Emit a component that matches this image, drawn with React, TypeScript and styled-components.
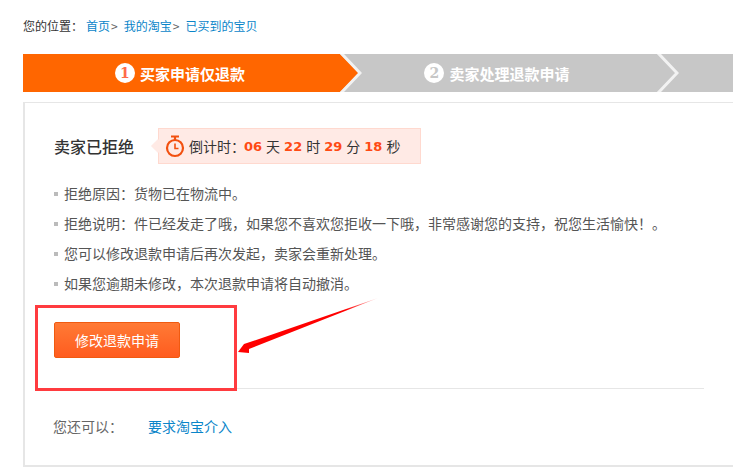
import React from 'react';
import styled, { createGlobalStyle } from 'styled-components';

const GlobalStyle = createGlobalStyle`
  html, body {
    margin: 0;
    padding: 0;
    background: #fff;
    overflow: hidden;
  }
  body {
    font-family: "Noto Sans CJK SC", "Liberation Sans", sans-serif;
    color: #333;
  }
`;

const Page = styled.div`
  position: relative;
  width: 733px;
  height: 467px;
  overflow: hidden;
  padding-left: 23px;
  box-sizing: border-box;
`;

const Crumbs = styled.div`
  height: 54px;
  padding-top: 17px;
  box-sizing: border-box;
  font-size: 12px;
  line-height: 18px;
  color: #333;
  display: flex;
`;

const CrumbLabel = styled.span`
  margin-right: 3px;
`;

const CrumbLink = styled.a`
  color: #0a85c9;
  text-decoration: none;
`;

const CrumbSep = styled.span`
  color: #666;
  margin: 0 6px 0 1px;
`;

const Steps = styled.div`
  display: flex;
  width: 710px;
  height: 38px;
  background: #c7c7c7;
  overflow: hidden;
`;

const Step = styled.div<{ $active?: boolean; $width: number }>`
  position: relative;
  width: ${p => p.$width}px;
  flex: none;
  height: 38px;
  display: flex;
  align-items: center;
  justify-content: center;
  gap: 5px;
  padding-right: 3px;
  box-sizing: border-box;
  color: #fff;
  font-size: 15px;
  font-weight: 700;
  background: ${p => (p.$active ? '#ff6600' : 'transparent')};
`;

const StepNum = styled.span<{ $active?: boolean }>`
  width: 20px;
  height: 20px;
  border-radius: 50%;
  background: #fff;
  color: ${p => (p.$active ? '#ff6b4a' : '#c7c7c7')};
  font: 700 14px/20px "DejaVu Serif", serif;
  text-align: center;
`;

const StepArrow = styled.svg<{ $fill: string }>`
  position: absolute;
  right: -22px;
  top: 0;
  width: 24px;
  height: 38px;
  z-index: 1;
  polygon { fill: ${p => p.$fill}; }
  polyline { fill: none; stroke: #f2f2f2; stroke-width: 3; }
`;

const Panel = styled.div`
  margin-top: 10px;
  width: 730px;
  height: 365px;
  box-sizing: border-box;
  border: 2px solid #e6e6e6;
  border-width: 1px 0 2px 2px;
  padding: 25px 0 0 29px;
`;

const Head = styled.div`
  display: flex;
  align-items: center;
  height: 36px;
`;

const Title = styled.h2`
  margin: 0;
  width: 104px;
  font-size: 16px;
  font-weight: 500;
  color: #333;
  line-height: 36px;
`;

const Timer = styled.div`
  position: relative;
  width: 263px;
  height: 36px;
  box-sizing: border-box;
  display: flex;
  align-items: center;
  background: #ffeae5;
  border: 1px solid #ffd9cf;
  padding-left: 6px;
  font-size: 14px;
  color: #333;

  &::before {
    content: '';
    position: absolute;
    left: -6px;
    top: 12px;
    width: 10px;
    height: 10px;
    background: #ffeae5;
    transform: rotate(45deg);
  }
`;

const ClockIcon = styled.svg`
  position: relative;
  width: 20px;
  height: 23px;
  margin-right: 4px;
`;

const TimerLabel = styled.span`
  margin-right: -5px;
`;

const Num = styled.b`
  color: #ff4a14;
  font: 700 13px "DejaVu Sans", sans-serif;
  margin: 0 4px;
`;

const Notes = styled.ul`
  list-style: none;
  margin: 14px 0 0;
  padding: 0;
`;

const Note = styled.li`
  position: relative;
  height: 30px;
  line-height: 30px;
  padding-left: 10px;
  font-size: 14px;
  color: #555;
  white-space: nowrap;

  &::before {
    content: '';
    position: absolute;
    left: 0;
    top: 14px;
    width: 4px;
    height: 4px;
    background: #bbb;
  }
`;

const EditButton = styled.button`
  display: block;
  margin-top: 24px;
  width: 126px;
  height: 36px;
  padding: 0;
  border: 1px solid #f05a10;
  border-radius: 2px;
  background: linear-gradient(#ff7a35, #ff5c1f);
  color: #fff;
  font: 400 14px "Noto Sans CJK SC", sans-serif;
`;

const Divider = styled.div`
  margin-top: 30px;
  width: 650px;
  height: 1px;
  background: #e6e6e6;
`;

const Extra = styled.div`
  margin-top: 27px;
  display: flex;
  font-size: 14px;
  line-height: 20px;
  color: #666;
`;

const ExtraLabel = styled.span`
  width: 95px;
  margin-left: -1px;
`;

const ExtraLink = styled.a`
  color: #0a85c9;
  text-decoration: none;
`;

const Callout = styled.div`
  position: absolute;
  left: 35px;
  top: 305px;
  width: 202px;
  height: 86px;
  box-sizing: border-box;
  border: 3px solid #ff3b3f;
`;

const CalloutArrow = styled.svg`
  position: absolute;
  left: 236px;
  top: 296px;
  width: 144px;
  height: 60px;
`;

const App: React.FC = () => (
  <Page>
    <GlobalStyle />
    <Crumbs>
      <CrumbLabel>您的位置：</CrumbLabel>
      <CrumbLink href="#">首页</CrumbLink>
      <CrumbSep>&gt;</CrumbSep>
      <CrumbLink href="#">我的淘宝</CrumbLink>
      <CrumbSep>&gt;</CrumbSep>
      <CrumbLink href="#">已买到的宝贝</CrumbLink>
    </Crumbs>
    <Steps>
      <Step $active $width={317}>
        <StepNum $active>1</StepNum>
        买家申请仅退款
        <StepArrow $fill="#ff6600" viewBox="0 0 24 38">
          <polygon points="0,0 2,0 21,19 2,38 0,38" />
          <polyline points="3,-1 22,19 3,39" />
        </StepArrow>
      </Step>
      <Step $width={317}>
        <StepNum>2</StepNum>
        卖家处理退款申请
        <StepArrow $fill="#c7c7c7" viewBox="0 0 24 38">
          <polyline points="3,-1 22,19 3,39" />
        </StepArrow>
      </Step>
    </Steps>
    <Panel>
      <Head>
        <Title>卖家已拒绝</Title>
        <Timer>
          <ClockIcon viewBox="0 0 20 23">
            <g fill="none" stroke="#f2500f" strokeWidth="2.2">
              <circle cx="10" cy="13" r="8" />
              <path d="M10 8.5V13.5H13.5" strokeWidth="1.6" />
              <path d="M6 1.5H14M10 1.5V5" />
            </g>
          </ClockIcon>
          <TimerLabel>倒计时：</TimerLabel><Num>06</Num>天<Num>22</Num>时<Num>29</Num>分<Num>18</Num>秒
        </Timer>
      </Head>
      <Notes>
        <Note>拒绝原因：货物已在物流中。</Note>
        <Note>拒绝说明：件已经发走了哦，如果您不喜欢您拒收一下哦，非常感谢您的支持，祝您生活愉快！。</Note>
        <Note>您可以修改退款申请后再次发起，卖家会重新处理。</Note>
        <Note>如果您逾期未修改，本次退款申请将自动撤消。</Note>
      </Notes>
      <EditButton>修改退款申请</EditButton>
      <Divider />
      <Extra>
        <ExtraLabel>您还可以：</ExtraLabel>
        <ExtraLink href="#">要求淘宝介入</ExtraLink>
      </Extra>
    </Panel>
    <Callout />
    <CalloutArrow viewBox="0 0 144 60">
      <defs>
        <linearGradient id="arrowFade" x1="0" y1="1" x2="1" y2="0">
          <stop offset="0.78" stopColor="#f00" />
          <stop offset="1" stopColor="#f00" stopOpacity="0.15" />
        </linearGradient>
      </defs>
      <path d="M142 2 L14 46 L8 48 L2 56 L13 57 L13 53 Z" fill="url(#arrowFade)" />
    </CalloutArrow>
  </Page>
);

export default App;
